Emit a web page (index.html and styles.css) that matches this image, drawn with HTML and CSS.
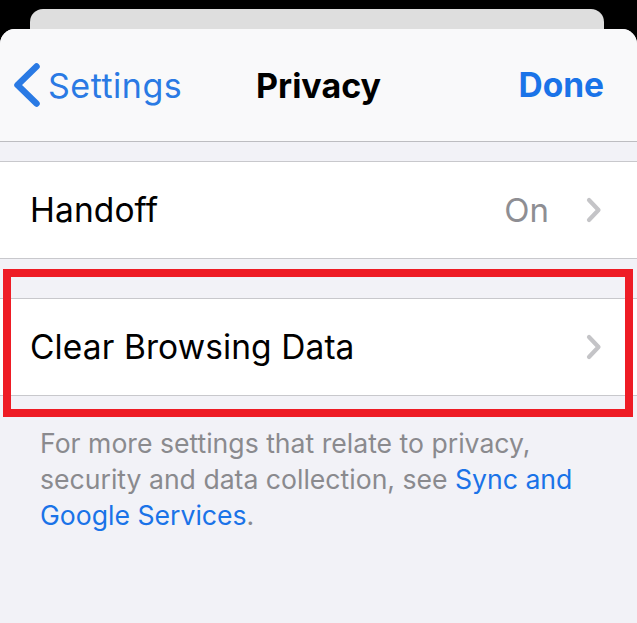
FILE: index.html
```html
<!DOCTYPE html>
<html>
<head>
<meta charset="utf-8">
<link rel="stylesheet" href="styles.css">
</head>
<body>
<div class="screen">
  <div class="back-card"></div>
  <div class="sheet">
    <div class="nav">
      <div class="nav-left">
        <svg class="back-chevron" width="28" height="46" viewBox="0 0 28 46"><path d="M23.5 4.5 L4.5 23 L23.5 41.5" fill="none" stroke="#2a7ae4" stroke-width="6.5" stroke-linecap="round" stroke-linejoin="round"/></svg>
        <span class="back-label">Settings</span>
      </div>
      <div class="nav-title">Privacy</div>
      <div class="nav-right">Done</div>
    </div>
    <div class="spacer-top"></div>
    <div class="group">
      <div class="row">
        <span class="row-label">Handoff</span>
        <span class="row-value">On</span>
        <svg class="chev" width="16" height="26" viewBox="0 0 16 26"><path d="M3 3 L12.5 13 L3 23" fill="none" stroke="#c4c4c7" stroke-width="4.2" stroke-linecap="round" stroke-linejoin="round"/></svg>
      </div>
    </div>
    <div class="spacer-mid"></div>
    <div class="group">
      <div class="row">
        <span class="row-label">Clear Browsing Data</span>
        <svg class="chev" width="16" height="26" viewBox="0 0 16 26"><path d="M3 3 L12.5 13 L3 23" fill="none" stroke="#c4c4c7" stroke-width="4.2" stroke-linecap="round" stroke-linejoin="round"/></svg>
      </div>
    </div>
    <p class="footer">For more settings that relate to privacy, security and data collection, see <span class="link">Sync and</span> <span class="link">Google Services</span>.</p>
    <div class="highlight"></div>
  </div>
</div>
</body>
</html>
```

FILE: styles.css
```css
* { box-sizing: border-box; }
html, body {
  margin: 0;
  padding: 0;
  background: #000;
}
body {
  width: 637px;
  height: 623px;
  overflow: hidden;
  font-family: Inter, "Noto Sans", "Liberation Sans", sans-serif;
}
.screen {
  width: 637px;
  height: 623px;
  padding-top: 9px;
  display: flex;
  flex-direction: column;
}
.back-card {
  margin-left: 30px;
  width: 574px;
  height: 20px;
  background: #dedede;
  border-radius: 13px 13px 0 0;
  flex: none;
}
.sheet {
  position: relative;
  flex: 1;
  background: #f2f2f7;
  border-radius: 15px 15px 0 0;
  overflow: hidden;
}
.nav {
  height: 113px;
  background: #f9f9fa;
  border-bottom: 1px solid #bdbdc1;
  display: grid;
  grid-template-columns: 1fr auto 1fr;
  align-items: center;
  padding: 0 33px;
}
.nav-left {
  display: flex;
  align-items: center;
  margin-left: -20px;
  color: #2a7ae4;
  font-size: 34px;
  letter-spacing: 0.5px;
}
.back-chevron { display: block; }
.back-label { margin-left: 7px; }
.nav-title {
  font-size: 34px;
  font-weight: 700;
  color: #000;
}
.nav-right {
  justify-self: end;
  font-size: 33.5px;
  font-weight: 700;
  color: #1a73e8;
}
.spacer-top { height: 19px; }
.spacer-mid { height: 39px; }
.group {
  background: #fff;
  border-top: 1px solid #c8c8cc;
  border-bottom: 1px solid #c8c8cc;
}
.row {
  height: 96px;
  display: flex;
  align-items: center;
  padding: 0 35px 0 30px;
}
.row-label {
  flex: 1;
  font-size: 33.5px;
  color: #000;
  letter-spacing: 0.1px;
}
.row-value {
  font-size: 33px;
  color: #8e8e93;
  margin-right: 37px;
}
.chev { display: block; flex: none; }
.footer {
  margin: 0;
  padding: 29px 30px 0 40px;
  font-size: 26.6px;
  line-height: 36px;
  color: #8a8a8e;
}
.link { color: #1a73e8; }
.highlight {
  position: absolute;
  left: 3px;
  top: 240px;
  width: 630px;
  height: 148px;
  border: 8px solid #ee1c25;
}
```
